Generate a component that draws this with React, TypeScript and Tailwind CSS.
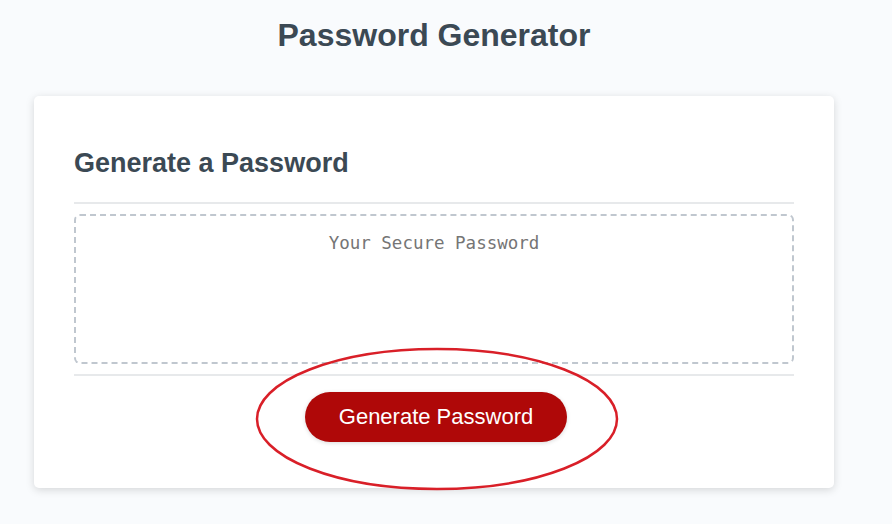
export default function App() {
  return (
    <div className="min-h-screen bg-[#f9fbfd] font-['Liberation_Sans',Arial,sans-serif] text-[#3b4954]">
      <div className="w-[868px]">
        {/* Page title */}
        <header className="text-center pt-[17px] pb-5">
          <h1 className="text-[32px] font-bold leading-[normal] mb-[22px]">Password Generator</h1>
        </header>

        {/* Card */}
        <div className="mx-auto max-w-[800px] bg-white rounded-[5px] shadow-[0_2px_8px_rgba(0,0,0,0.15)] px-10 pt-[30px] pb-[30px] text-[18px]">
          <h2 className="text-[27px] font-bold leading-[normal] mt-[22px] mb-[23px]">Generate a Password</h2>
          <div className="h-[2px] bg-[#e7e9eb]" />

          <textarea
            readOnly
            placeholder="Your Secure Password"
            className="block w-full h-[150px] mt-[10px] mb-[10px] px-[15px] pt-[16px] resize-none overflow-hidden text-center border-2 border-dashed border-[#c0c7cf] rounded-[6px] font-['DejaVu_Sans_Mono',monospace] text-[17.5px] leading-[22px] outline-none placeholder:text-[#757575]"
          />

          <div className="h-[2px] bg-[#e7e9eb]" />
          <div className="text-center">
            <div className="relative inline-block mt-4 mb-4 ml-5 mr-4">
              <button className="bg-[#af0808] text-white rounded-[25px] text-[22px] leading-[22px] px-[34px] py-[14px] shadow-[0_1px_4px_rgba(0,0,0,0.15)]">
                Generate Password
              </button>
              {/* hand-drawn highlight round the button */}
              <svg
                className="absolute left-[-51px] top-[-45px] pointer-events-none"
                width="366"
                height="144"
                viewBox="0 0 366 144"
                fill="none"
              >
                <ellipse cx="183" cy="72" rx="180" ry="70" stroke="#d91f28" strokeWidth="2.5" />
              </svg>
            </div>
          </div>
        </div>
      </div>
    </div>
  )
}
